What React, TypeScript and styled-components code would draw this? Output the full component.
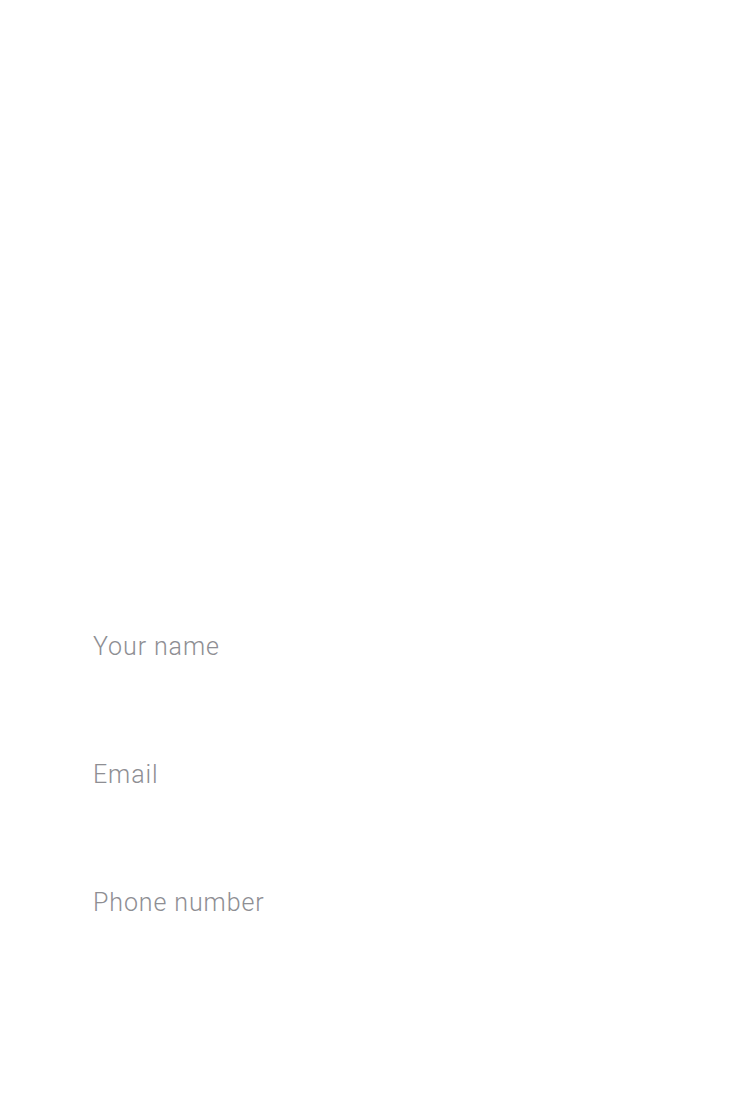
import React from "react";
import styled, { createGlobalStyle } from "styled-components";

const Global = createGlobalStyle`
  html, body { margin: 0; padding: 0; background: #ffffff; }
  * { box-sizing: border-box; }
`;

const Page = styled.div`
  width: 750px;
  min-height: 1108px;
  background: #ffffff;
  padding: 614px 92px 0;
  font-family: Roboto, "Liberation Sans", sans-serif;
`;

const Form = styled.form`
  display: flex;
  flex-direction: column;
  gap: 64px;
`;

const Field = styled.input`
  display: block;
  width: 100%;
  height: 64px;
  border: none;
  outline: none;
  padding: 0 0 0 1px;
  background: transparent;
  font-family: Roboto, "Liberation Sans", sans-serif;
  font-weight: 300;
  font-size: 25px;
  letter-spacing: 0.9px;
  color: #333;
  &::placeholder {
    color: #8e8e93;
    opacity: 1;
  }
`;

export default function App() {
  return (
    <>
      <Global />
      <Page>
        <Form>
          <Field placeholder="Your name" />
          <Field placeholder="Email" />
          <Field placeholder="Phone number" />
        </Form>
      </Page>
    </>
  );
}
